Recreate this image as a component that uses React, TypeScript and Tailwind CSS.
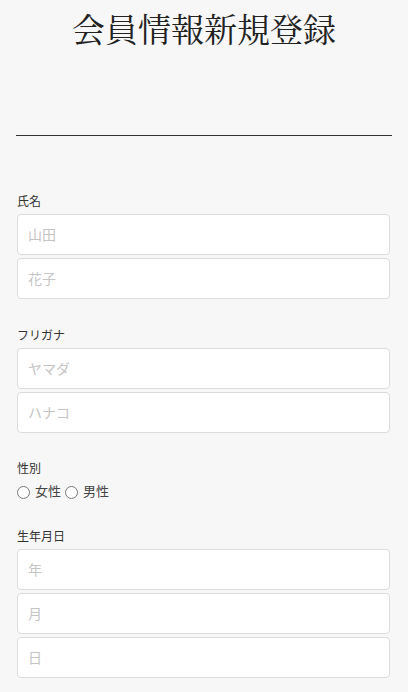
import React from "react";

const sans = "font-['Liberation_Sans','Noto_Sans_CJK_JP',sans-serif]";

function Field({ placeholder }: { placeholder: string }) {
  return (
    <input
      type="text"
      placeholder={placeholder}
      className="box-border h-[41px] w-full rounded-[4px] border border-[#dcdcdc] bg-white px-[10px] text-[14px] text-[#333] outline-none placeholder:text-[#c4c4c4]"
    />
  );
}

function Section({ label, children, className }: { label: string; children: React.ReactNode; className: string }) {
  return (
    <div className={className}>
      <p className="mb-[2px] text-[12px] leading-[20px] text-[#333]">{label}</p>
      <div className="flex flex-col gap-[3px]">{children}</div>
    </div>
  );
}

export default function App() {
  return (
    <div className={`min-h-[692px] bg-[#f7f7f7] ${sans}`}>
      <h1 className="pt-[7px] text-center font-['Noto_Serif_CJK_JP','Liberation_Serif','Noto_Sans_CJK_JP',serif] text-[33px] font-normal leading-[42px] text-[#222]">
        会員情報新規登録
      </h1>
      <div className="mx-4 mt-[86px] border-t border-[#333]" />
      <form className="ml-[17px] mr-[18px]">
        <Section label="氏名" className="mt-[56px]">
          <Field placeholder="山田" />
          <Field placeholder="花子" />
        </Section>
        <Section label="フリガナ" className="mt-[27px]">
          <Field placeholder="ヤマダ" />
          <Field placeholder="ハナコ" />
        </Section>
        <div className="mt-[26px]">
          <p className="mb-[3px] text-[12px] leading-[20px] text-[#333]">性別</p>
          <div className="flex items-center text-[13px] leading-[20px] text-[#444]">
            <label className="flex items-center">
              <input type="radio" name="sex" className="m-0 mr-[5px] h-[13px] w-[13px]" />
              女性
            </label>
            <label className="ml-[4px] flex items-center">
              <input type="radio" name="sex" className="m-0 mr-[5px] h-[13px] w-[13px]" />
              男性
            </label>
          </div>
        </div>
        <Section label="生年月日" className="mt-[25px]">
          <Field placeholder="年" />
          <Field placeholder="月" />
          <Field placeholder="日" />
        </Section>
      </form>
    </div>
  );
}
